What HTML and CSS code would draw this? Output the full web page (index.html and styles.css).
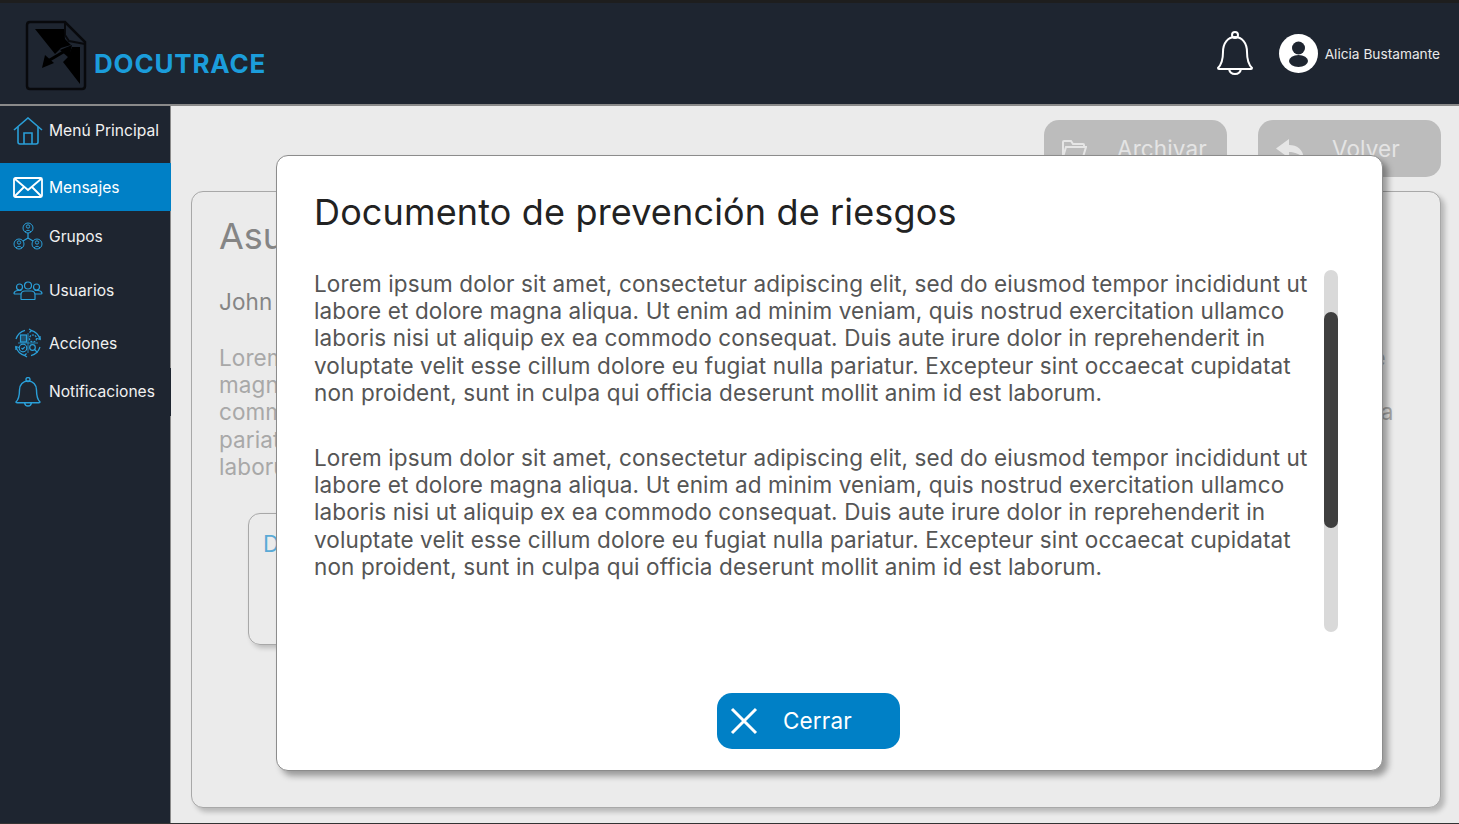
FILE: index.html
```html
<!DOCTYPE html>
<html lang="es">
<head>
  <meta charset="UTF-8">
  <title>Docutrace - Mensajes</title>
  <link rel="stylesheet" href="styles.css">
</head>
<body>

  <header class="topbar">
    <div class="brand">
      <svg class="brand-icon" width="62" height="72" viewBox="0 0 62 72">
        <path d="M5 2H40L60 22V66Q60 69 57 69H5Q2 69 2 66V5Q2 2 5 2Z" fill="none" stroke="#08090c" stroke-width="2.5"/>
        <path d="M40 2V15L44 21L60 24" fill="none" stroke="#08090c" stroke-width="2"/>
        <path d="M10 9H39L40 19L46 25L36 28L30 34Z" fill="#000"/>
        <path d="M55 27V64L38 42L43 37L47 27Z" fill="#000"/>
        <path d="M17 48L20 35L29 43Z" fill="#000"/>
        <path d="M47 25L44 38L35 30Z" fill="#000"/>
        <path d="M23 41L40 31" stroke="#000" stroke-width="3"/>
      </svg>
      <span class="brand-name">DOCUTRACE</span>
    </div>
    <div class="top-actions">
      <svg class="top-bell" width="38" height="46" viewBox="0 0 38 46" fill="none" stroke="#fff" stroke-width="2">
        <path d="M2 37C6 33 7 29 7 21C7 12 12 6 19 6C26 6 31 12 31 21C31 29 32 33 36 37Q36 38 35 38H3Q2 38 2 37Z"/>
        <circle cx="19" cy="4" r="3"/>
        <path d="M13 38Q14 43 19 43Q24 43 25 38"/>
      </svg>
      <svg class="avatar" width="39" height="39" viewBox="0 0 39 39">
        <circle cx="19.5" cy="19.5" r="19.5" fill="#fff"/>
        <circle cx="19.5" cy="14" r="6.5" fill="#1e2530"/>
        <ellipse cx="19.5" cy="27" rx="9.5" ry="6" fill="#1e2530"/>
      </svg>
      <span class="user-name">Alicia Bustamante</span>
    </div>
  </header>

  <div class="layout">
    <nav class="sidebar">
      <a class="nav-item nav-home">
        <svg width="30" height="28" viewBox="0 0 30 28" fill="none" stroke="#2a9fd8" stroke-width="1.6">
          <path d="M1 13L15 1L29 13"/>
          <path d="M5 10V25Q5 27 7 27H23Q25 27 25 25V10"/>
          <path d="M11 27V16H19V27"/>
        </svg>
        <span>Menú Principal</span>
      </a>
      <a class="nav-item nav-active">
        <svg width="30" height="21" viewBox="0 0 30 21" fill="none" stroke="#fff" stroke-width="1.8">
          <rect x="1" y="1" width="28" height="19" rx="1.5"/>
          <path d="M2 2L15 13L28 2"/>
          <path d="M2 19L11 10M28 19L19 10"/>
        </svg>
        <span>Mensajes</span>
      </a>
      <a class="nav-item nav-groups">
        <svg width="30" height="28" viewBox="0 0 30 28" fill="none" stroke="#2a9fd8" stroke-width="1">
          <circle cx="15" cy="6" r="5"/><circle cx="6" cy="22" r="5"/><circle cx="24" cy="22" r="5"/>
          <circle cx="15" cy="4.5" r="1.7"/><circle cx="6" cy="20.5" r="1.7"/><circle cx="24" cy="20.5" r="1.7"/>
          <path d="M12 10Q15 6.5 18 10M3 26Q6 22.5 9 26M21 26Q24 22.5 27 26"/>
          <path d="M15 11V16M15 16L10 19M15 16L20 19" stroke-width="1.3"/>
        </svg>
        <span>Grupos</span>
      </a>
      <a class="nav-item nav-users">
        <svg width="30" height="19" viewBox="0 0 30 19" fill="none" stroke="#2a9fd8" stroke-width="1.2">
          <circle cx="15" cy="4.5" r="3.5"/>
          <circle cx="6.5" cy="6" r="3"/>
          <circle cx="23.5" cy="6" r="3"/>
          <path d="M8 18V14Q8 10 12 10H18Q22 10 22 14V18Q22 18.5 21 18.5H9Q8 18.5 8 18Z"/>
          <path d="M8 13H2Q1 13 1 12Q2 9.5 5 9.5H8.5M22 13H28Q29 13 29 12Q28 9.5 25 9.5H21.5"/>
        </svg>
        <span>Usuarios</span>
      </a>
      <a class="nav-item nav-actions">
        <svg width="30" height="30" viewBox="0 0 30 30" fill="none" stroke="#2a9fd8" stroke-width="1.2">
          <path d="M3 11A13 13 0 0 1 12 2.3M18 2.3A13 13 0 0 1 27 11M27 19A13 13 0 0 1 18 27.7M12 27.7A13 13 0 0 1 3 19"/>
          <path d="M27 8L27.2 11.5L24 10.5M3 22L2.8 18.5L6 19.5M16 1L18.5 2.5L16.5 4.5M14 29L11.5 27.5L13.5 25.5"/>
          <rect x="7.5" y="7" width="6" height="7" fill="#2a9fd8" fill-opacity=".35"/>
          <circle cx="20" cy="10.5" r="3.5" stroke-dasharray="2 1"/>
          <circle cx="10" cy="20" r="3.8"/>
          <path d="M8.5 20L9.7 21.2L11.8 18.8"/>
          <circle cx="19.5" cy="19.5" r="2.8"/>
          <path d="M21.5 21.5L24.5 24.5"/>
          <path d="M15 5V25M5 15H25" stroke-width=".8"/>
        </svg>
        <span>Acciones</span>
      </a>
      <a class="nav-item nav-notif">
        <svg width="26" height="30" viewBox="0 0 26 30" fill="none" stroke="#2a9fd8" stroke-width="1.4">
          <path d="M1 25C4 22 4.5 18 4.5 13C4.5 7.5 8 4 13 4C18 4 21.5 7.5 21.5 13C21.5 18 22 22 25 25Q25 25.7 24 25.7H2Q1 25.7 1 25Z"/>
          <circle cx="13" cy="2.5" r="2"/>
          <path d="M9.5 25.7Q10 29 13 29Q16 29 16.5 25.7"/>
        </svg>
        <span>Notificaciones</span>
      </a>
    </nav>

    <main class="content">
      <div class="content-actions">
        <button class="ghost-btn ghost-archive">
          <svg width="26" height="20" viewBox="0 0 26 20" fill="none" stroke="#e6e6e6" stroke-width="2">
            <path d="M2 18V3Q2 2 3 2H10L12 5H22Q23 5 23 6V8"/>
            <path d="M2 18L5 8H25L22 18Z"/>
          </svg>
          <span>Archivar</span>
        </button>
        <button class="ghost-btn ghost-back">
          <svg width="30" height="20" viewBox="0 0 30 20" fill="#e6e6e6">
            <path d="M14 0V6C22 6 28 10 29 20C25 15 20 13 14 13V19L1 9.5Z"/>
          </svg>
          <span>Volver</span>
        </button>
      </div>

      <section class="message-card">
        <h2 class="message-title">Asunto del mensaje</h2>
        <p class="message-from">John Doe</p>
        <p class="message-body">Lorem ipsum dolor sit amet, consectetur adipiscing elit, sed do eiusmod tempor incididunt ut labore et dolore magna aliqua. Ut enim ad minim veniam, quis nostrud exercitation ullamco laboris nisi ut aliquip ex ea commodo consequat. Duis aute irure dolor in reprehenderit in voluptate velit esse cillum dolore eu fugiat nulla pariatur. Excepteur sint occaecat cupidatat non proident, sunt in culpa qui officia deserunt mollit anim id est laborum.</p>
        <div class="attachment">
          <span class="attachment-name">Documento</span>
        </div>
      </section>
    </main>
  </div>

  <div class="modal" role="dialog" aria-labelledby="modal-title">
    <h1 id="modal-title" class="modal-title">Documento de prevención de riesgos</h1>
    <div class="modal-scroll">
      <div class="modal-text">
        <p>Lorem ipsum dolor sit amet, consectetur adipiscing elit, sed do eiusmod tempor incididunt ut labore et dolore magna aliqua. Ut enim ad minim veniam, quis nostrud exercitation ullamco laboris nisi ut aliquip ex ea commodo consequat. Duis aute irure dolor in reprehenderit in voluptate velit esse cillum dolore eu fugiat nulla pariatur. Excepteur sint occaecat cupidatat non proident, sunt in culpa qui officia deserunt mollit anim id est laborum.</p>
        <p>Lorem ipsum dolor sit amet, consectetur adipiscing elit, sed do eiusmod tempor incididunt ut labore et dolore magna aliqua. Ut enim ad minim veniam, quis nostrud exercitation ullamco laboris nisi ut aliquip ex ea commodo consequat. Duis aute irure dolor in reprehenderit in voluptate velit esse cillum dolore eu fugiat nulla pariatur. Excepteur sint occaecat cupidatat non proident, sunt in culpa qui officia deserunt mollit anim id est laborum.</p>
      </div>
      <div class="scroll-track"><div class="scroll-thumb"></div></div>
    </div>
    <button class="close-btn">
      <svg width="28" height="28" viewBox="0 0 28 28" fill="none" stroke="#fff" stroke-width="3">
        <path d="M2 2L26 26M26 2L2 26"/>
      </svg>
      <span>Cerrar</span>
    </button>
  </div>

</body>
</html>
```

FILE: styles.css
```css
* {
  box-sizing: border-box;
}
body {
  margin: 0;
  height: 824px;
  overflow: hidden;
  font-family: "Inter", "Liberation Sans", sans-serif;
  background: #ebebeb;
  display: flex;
  flex-direction: column;
}

/* barra superior */
.topbar {
  flex: none;
  height: 106px;
  background: #1e2530;
  border-top: 3px solid #1e1e1e;
  border-bottom: 2px solid #8a8a8a;
  display: flex;
  align-items: center;
  justify-content: space-between;
  padding: 0 19px 0 25px;
}
.brand {
  display: flex;
  align-items: flex-end;
  gap: 7px;
  height: 72px;
  margin-top: 5px;
}
.brand-name {
  font-weight: 700;
  font-size: 26px;
  letter-spacing: 0.8px;
  color: #1b9ddb;
  line-height: 35px;
  margin-bottom: 11px;
}
.top-actions {
  display: flex;
  align-items: center;
}
.top-bell {
  margin-right: 25px;
}
.avatar {
  margin-right: 7px;
}
.user-name {
  font-size: 13.7px;
  color: #e9e9e9;
}

.layout {
  flex: 1;
  display: flex;
  min-height: 0;
  border-bottom: 1px solid #333;
}

/* menu lateral */
.sidebar {
  flex: none;
  width: 171px;
  background: #1e2530;
  border-right: 1px solid #8a8a8a;
  display: flex;
  flex-direction: column;
}
.nav-item {
  display: flex;
  align-items: center;
  gap: 6px;
  padding-left: 13px;
  color: #f1f1f1;
  font-size: 15.6px;
}
.nav-home {
  height: 57px;
  padding-bottom: 8px;
}
.nav-active {
  height: 48px;
  background: #0080c6;
  color: #fff;
  margin-right: -1px;
}
.nav-groups {
  height: 53px;
  padding-bottom: 3px;
}
.nav-users {
  height: 53px;
  padding-bottom: 1px;
}
.nav-actions {
  height: 51px;
  padding-top: 1px;
}
.nav-notif {
  height: 48px;
  margin-right: -1px;
  background: #1e2530;
  padding-left: 15px;
  padding-bottom: 1px;
}
.nav-notif span {
  margin-left: 2px;
}

/* contenido atenuado detras del modal */
.content {
  flex: 1;
  min-width: 0;
  padding: 14px 18px 15px 20px;
  display: flex;
  flex-direction: column;
  gap: 14px;
}
.content-actions {
  display: flex;
  justify-content: flex-end;
  gap: 31px;
}
.ghost-btn {
  height: 57px;
  width: 183px;
  border: 0;
  border-radius: 15px;
  background: #bcbcbc;
  color: #e4e4e4;
  font-family: inherit;
  font-size: 22.5px;
  letter-spacing: 0.12px;
  display: flex;
  align-items: center;
  gap: 30px;
  padding: 0 0 0 17px;
}
.ghost-back {
  gap: 27px;
}
.message-card {
  flex: 1;
  border: 1px solid #a8a8a8;
  border-radius: 12px;
  background: #ebebeb;
  box-shadow: 4px 4px 5px rgba(0, 0, 0, .22);
  padding: 22px 27px;
}
.message-title {
  margin: 0;
  font-size: 36px;
  font-weight: 400;
  line-height: 44px;
  color: #858585;
}
.message-from {
  margin: 30px 0 0;
  font-size: 22.5px;
  letter-spacing: 0.12px;
  line-height: 27px;
  color: #858585;
}
.message-body {
  margin: 29px 0 0;
  width: 1180px;
  font-size: 22.5px;
  letter-spacing: 0.1px;
  line-height: 27.2px;
  color: #a8a8a8;
}
.attachment {
  margin: 33px 0 0 29px;
  width: 400px;
  height: 132px;
  border: 1px solid #a8a8a8;
  border-radius: 12px;
  box-shadow: 3px 3px 5px rgba(0, 0, 0, .2);
  padding: 16px 14px;
}
.attachment-name {
  font-size: 22.5px;
  color: #5aaad6;
}

/* modal */
.modal {
  position: absolute;
  left: 276px;
  top: 155px;
  width: 1107px;
  height: 616px;
  background: #fff;
  border: 1px solid #8c8c8c;
  border-radius: 12px;
  box-shadow: 5px 5px 6px rgba(0, 0, 0, .35);
  padding: 31px 44px 21px 37px;
  display: flex;
  flex-direction: column;
}
.modal-title {
  margin: 0;
  font-size: 36px;
  font-weight: 400;
  letter-spacing: 0.15px;
  line-height: 50px;
  color: #222;
}
.modal-scroll {
  margin-top: 33px;
  flex: 1;
  min-height: 0;
  display: flex;
  justify-content: space-between;
}
.modal-text {
  width: 1000px;
  font-size: 22.5px;
  letter-spacing: 0.12px;
  line-height: 27.2px;
  color: #555;
}
.modal-text p {
  margin: 0 0 38px;
}
.scroll-track {
  width: 14px;
  height: 362px;
  border-radius: 7px;
  background: #d9d9d9;
  padding-top: 42px;
}
.scroll-thumb {
  height: 216px;
  border-radius: 7px;
  background: #3f3f3f;
}
.close-btn {
  align-self: flex-start;
  margin-left: 403px;
  width: 183px;
  height: 56px;
  border: 0;
  border-radius: 15px;
  background: #0080c6;
  color: #fff;
  font-family: inherit;
  font-size: 22.5px;
  letter-spacing: 0.14px;
  display: flex;
  align-items: center;
  gap: 25px;
  padding: 0 0 1px 13px;
}
```
